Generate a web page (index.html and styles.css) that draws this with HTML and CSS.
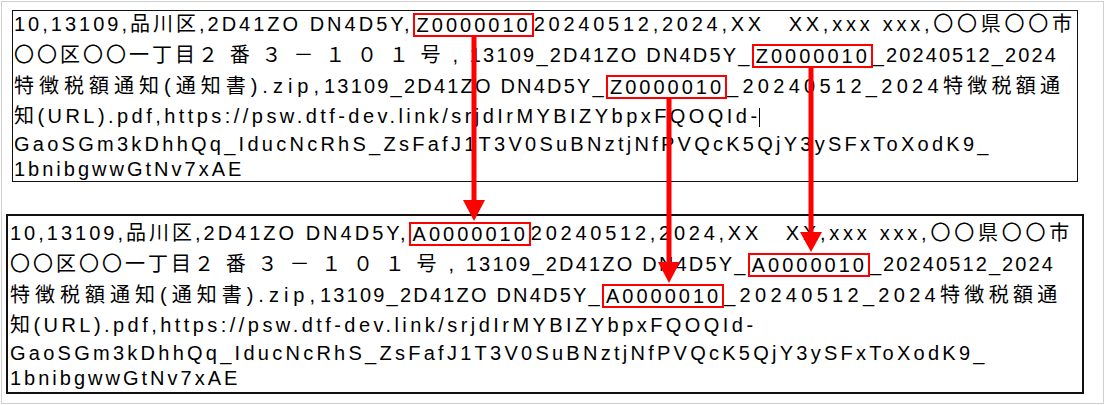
FILE: index.html
```html
<!DOCTYPE html>
<html lang="ja">
<head>
<meta charset="utf-8">
<title>Replace</title>
<link rel="stylesheet" href="styles.css">
</head>
<body>
<div class="page">
  <div class="frame">
    <div class="box box-top">
      <div class="line l1">10,13109,品川区,2D41ZO DN4D5Y,<span class="mark">Z0000010</span><span class="s-tail1">20240512,2024,XX　XX,xxx xxx,〇〇県〇〇市</span></div>
      <div class="line l2">〇〇区〇〇一丁目<span class="s-fw">２番３－１０１号,</span><span class="s-id">13109_2D41ZO DN4D5Y_</span><span class="mark">Z0000010</span><span class="s-date">_20240512_2024</span></div>
      <div class="line l3"><span class="s-name">特徴税額通知(通知書).zip,</span><span class="s-id">13109_2D41ZO DN4D5Y_</span><span class="mark">Z0000010</span><span class="s-tail3">_20240512_2024特徴税額通</span></div>
      <div class="line l4">知(URL).pdf,https://psw.dtf-dev.link/srjdIrMYBIZYbpxFQOQId-<span class="caret"></span></div>
      <div class="line l5">GaoSGm3kDhhQq_IducNcRhS_ZsFafJ1T3V0SuBNztjNfPVQcK5QjY3ySFxToXodK9_</div>
      <div class="line l6">1bnibgwwGtNv7xAE</div>
    </div>
    <div class="box box-bottom">
      <div class="line l1">10,13109,品川区,2D41ZO DN4D5Y,<span class="mark">A0000010</span><span class="s-tail1">20240512,2024,XX　XX,xxx xxx,〇〇県〇〇市</span></div>
      <div class="line l2">〇〇区〇〇一丁目<span class="s-fw">２番３－１０１号,</span><span class="s-id">13109_2D41ZO DN4D5Y_</span><span class="mark">A0000010</span><span class="s-date">_20240512_2024</span></div>
      <div class="line l3"><span class="s-name">特徴税額通知(通知書).zip,</span><span class="s-id">13109_2D41ZO DN4D5Y_</span><span class="mark">A0000010</span><span class="s-tail3">_20240512_2024特徴税額通</span></div>
      <div class="line l4">知(URL).pdf,https://psw.dtf-dev.link/srjdIrMYBIZYbpxFQOQId-</div>
      <div class="line l5">GaoSGm3kDhhQq_IducNcRhS_ZsFafJ1T3V0SuBNztjNfPVQcK5QjY3ySFxToXodK9_</div>
      <div class="line l6">1bnibgwwGtNv7xAE</div>
    </div>
  </div>
  <svg class="arrows" width="1105" height="405" viewBox="0 0 1105 405" aria-hidden="true">
    <g fill="#ff0000">
      <rect x="471.5" y="36" width="5" height="166"/>
      <polygon points="463,200 485,200 474,221"/>
      <rect x="666.5" y="97" width="5" height="167"/>
      <polygon points="658,262 680,262 669,283"/>
      <rect x="808.5" y="67" width="5" height="167"/>
      <polygon points="800,232 822,232 811,252"/>
    </g>
  </svg>
</div>
</body>
</html>
```

FILE: styles.css
```css
* {
  box-sizing: border-box;
}

html, body {
  margin: 0;
  padding: 0;
  background: #ffffff;
}

.page {
  position: relative;
  width: 1105px;
  height: 405px;
}

.frame {
  position: absolute;
  left: 1px;
  top: 1px;
  width: 1103px;
  height: 403px;
  border: 1px solid #cfcfcf;
  display: flex;
  flex-direction: column;
  align-items: flex-start;
  gap: 32px;
  padding-top: 8px;
  font-family: "Liberation Sans", "Noto Sans CJK JP", sans-serif;
  font-size: 20px;
  letter-spacing: 3px;
  color: #000;
}

.box {
  display: flex;
  flex-direction: column;
  gap: 5px;
  background: #fff;
}

.box-top {
  margin-left: 10px;
  width: 1066px;
  height: 172px;
  border: 1px solid #111;
  padding: 0 0 0 1px;
}

.box-bottom {
  margin-left: 4px;
  width: 1078px;
  height: 180px;
  border: 2px solid #111;
  padding: 4px 0 0 2px;
}

.line {
  height: 26px;
  line-height: 26px;
  white-space: nowrap;
}

.l4 {
  margin-top: -1px;
  letter-spacing: 3.45px;
}

.l5 {
  margin-top: -3px;
  letter-spacing: 3.26px;
}

.l6 {
  margin-top: -6px;
}

.s-tail1 {
  letter-spacing: 3.75px;
}

.s-fw {
  letter-spacing: 11.8px;
}

.s-id {
  letter-spacing: 2.2px;
}

.s-date {
  letter-spacing: 2.1px;
}

.s-name {
  letter-spacing: 5px;
}

.s-tail3 {
  letter-spacing: 4.3px;
}

.mark {
  display: inline-block;
  border: 2px solid #ff0000;
  line-height: 20px;
  padding: 0 1px 0 2px;
  letter-spacing: 3px;
  vertical-align: middle;
  margin-top: -1px;
}

.caret {
  display: inline-block;
  width: 1px;
  height: 19px;
  background: #000;
  vertical-align: middle;
  margin-left: -2px;
}

.arrows {
  position: absolute;
  left: 0;
  top: 0;
  pointer-events: none;
}
```
